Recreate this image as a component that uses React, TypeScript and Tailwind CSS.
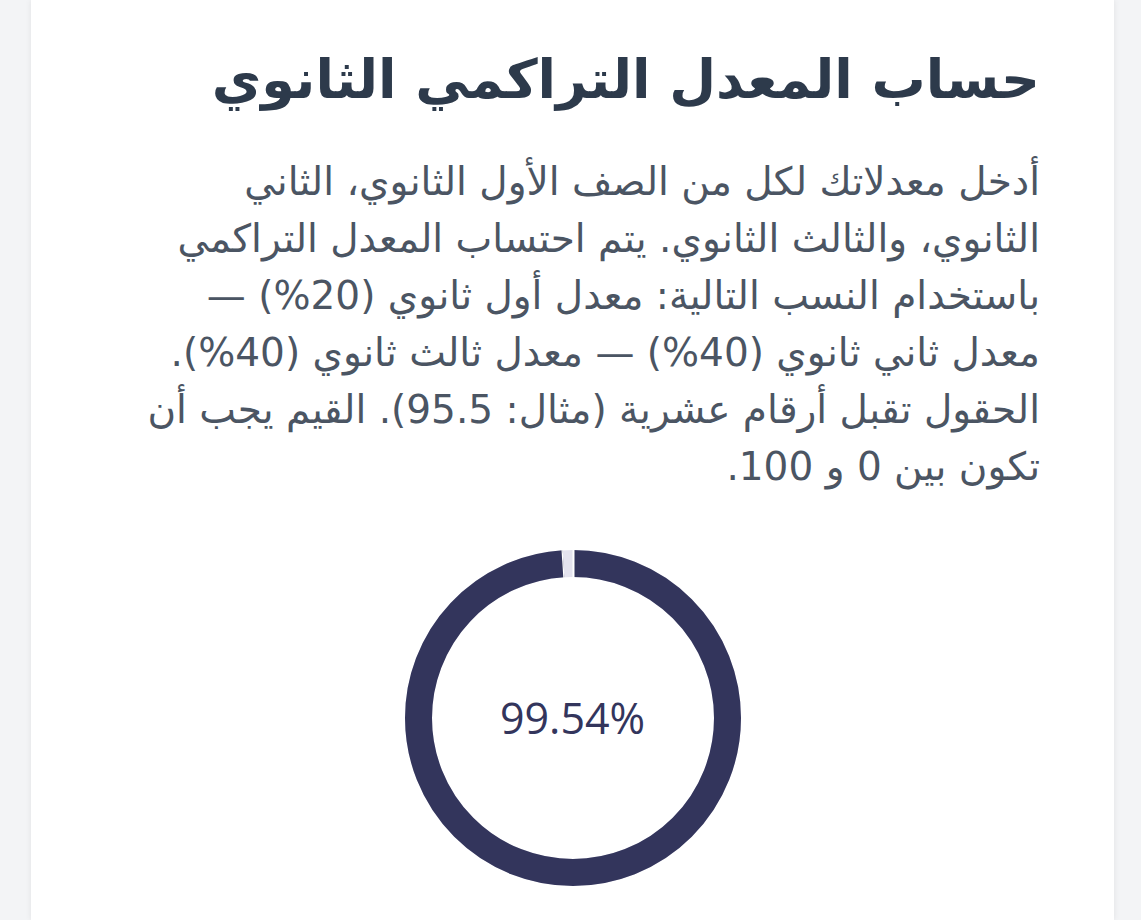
const lines = [
  'أدخل معدلاتك لكل من الصف الأول الثانوي، الثاني',
  'الثانوي، والثالث الثانوي. يتم احتساب المعدل التراكمي',
  'باستخدام النسب التالية: معدل أول ثانوي (20%) —',
  'معدل ثاني ثانوي (40%) — معدل ثالث ثانوي (40%).',
  'الحقول تقبل أرقام عشرية (مثال: 95.5). القيم يجب أن',
  'تكون بين 0 و 100.',
]

function Donut({ value }: { value: number }) {
  const size = 336
  const c = size / 2
  const r = 154.5
  const stroke = 27
  const circ = 2 * Math.PI * r
  // keep the remainder slice visible, like the chart does
  const rest = Math.max(((100 - value) / 100) * circ, 10)
  const filled = circ - rest
  const endAngle = (filled / circ) * 2 * Math.PI
  const inner = r - stroke / 2 - 1
  const outer = r + stroke / 2 + 1

  return (
    <div className="relative w-[336px] h-[336px]">
      <svg width={size} height={size} viewBox={`0 0 ${size} ${size}`}>
        <circle cx={c} cy={c} r={r} fill="none" stroke="#e4e3ee" strokeWidth={stroke} />
        <circle
          cx={c}
          cy={c}
          r={r}
          fill="none"
          stroke="#33355c"
          strokeWidth={stroke}
          strokeDasharray={`${filled} ${circ}`}
          transform={`rotate(-90 ${c} ${c})`}
        />
        {/* segment borders */}
        <line x1={c + 0.5} y1={c - inner} x2={c + 0.5} y2={c - outer} stroke="#ffffff" strokeWidth={2} />
        <line
          x1={c + inner * Math.sin(endAngle)}
          y1={c - inner * Math.cos(endAngle)}
          x2={c + outer * Math.sin(endAngle)}
          y2={c - outer * Math.cos(endAngle)}
          stroke="#ffffff"
          strokeWidth={1.2}
        />
      </svg>
      <div className="absolute inset-0 flex items-center justify-center">
        <span
          className="text-[43px] text-[#33355c]"
          style={{ fontFamily: '"Open Sans", sans-serif' }}
        >
          {value.toFixed(2)}%
        </span>
      </div>
    </div>
  )
}

export default function App() {
  return (
    <div className="min-h-[920px] bg-[#f3f4f6] pl-[31px] pr-[27px]">
      <div
        dir="rtl"
        className="bg-white h-[920px] shadow-[0_0_6px_rgba(0,0,0,0.08)] px-[74px] pt-[40px]"
        style={{ fontFamily: '"DejaVu Sans", "Noto Sans", sans-serif' }}
      >
        <h1 className="text-[54px] font-bold leading-[80px] text-[#2d3a4b] whitespace-nowrap">
          حساب المعدل التراكمي الثانوي
        </h1>
        <div className="mt-[33px] text-[39px] leading-[57px] text-[#4b5563]">
          {lines.map((l, i) => (
            <p key={i} className="whitespace-nowrap">
              {l}
            </p>
          ))}
        </div>
        <div className="flex justify-center mt-[55px]">
          <Donut value={99.54} />
        </div>
      </div>
    </div>
  )
}
